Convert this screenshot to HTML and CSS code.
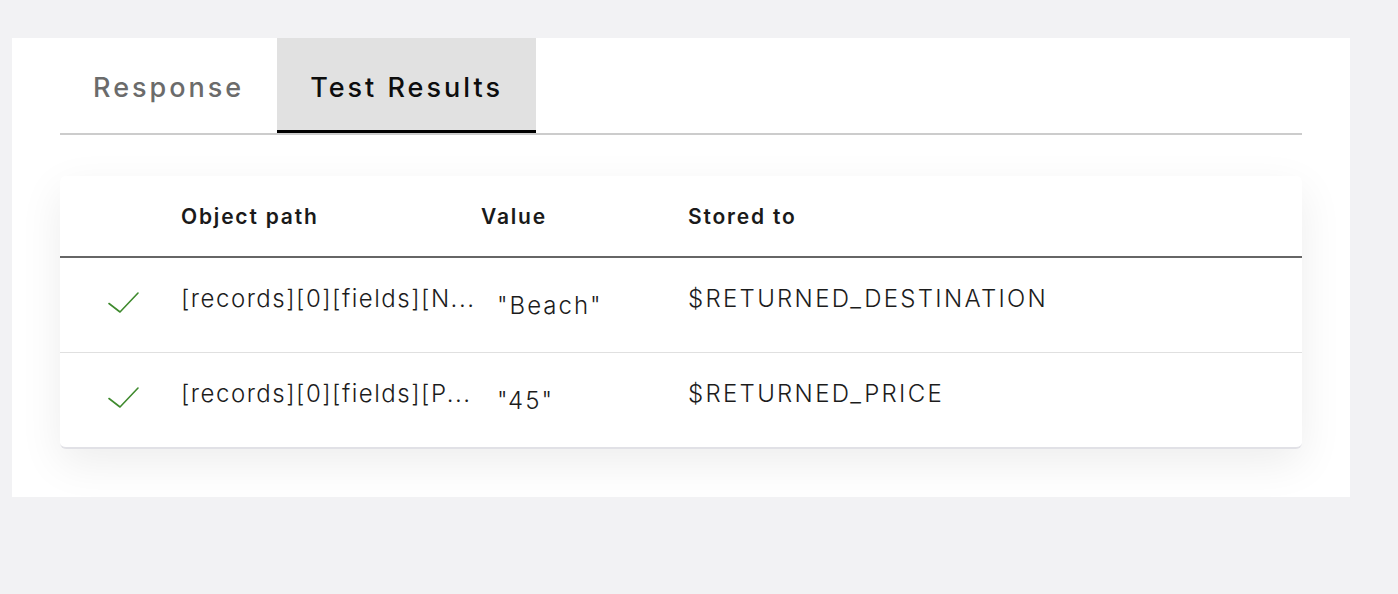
FILE: index.html
```html
<!DOCTYPE html>
<html lang="en">
<head>
<meta charset="utf-8">
<title>Test Results</title>
<link rel="stylesheet" href="styles.css">
</head>
<body>
<div class="panel">
  <div class="tabs">
    <div class="tab">Response</div>
    <div class="tab tab-active">Test Results</div>
  </div>
  <div class="card">
    <div class="row row-head">
      <div class="cell cell-icon"></div>
      <div class="cell cell-path">Object path</div>
      <div class="cell cell-value">Value</div>
      <div class="cell cell-store">Stored to</div>
    </div>
    <div class="row row-body">
      <div class="cell cell-icon">
        <svg class="check" width="32" height="22" viewBox="0 0 32 22"><path d="M1 11.5 L12 20 L30 1" fill="none" stroke="#3f8a2e" stroke-width="1.6" stroke-linecap="round" stroke-linejoin="round"/></svg>
      </div>
      <div class="cell cell-path">[records][0][fields][N...</div>
      <div class="cell cell-value">"Beach"</div>
      <div class="cell cell-store">$RETURNED_DESTINATION</div>
    </div>
    <div class="row row-body row-last">
      <div class="cell cell-icon">
        <svg class="check" width="32" height="22" viewBox="0 0 32 22"><path d="M1 11.5 L12 20 L30 1" fill="none" stroke="#3f8a2e" stroke-width="1.6" stroke-linecap="round" stroke-linejoin="round"/></svg>
      </div>
      <div class="cell cell-path">[records][0][fields][P...</div>
      <div class="cell cell-value">"45"</div>
      <div class="cell cell-store">$RETURNED_PRICE</div>
    </div>
  </div>
</div>
</body>
</html>
```
FILE: styles.css
```css
html, body {
  margin: 0;
  padding: 0;
  background: #f2f2f4;
}
body {
  padding: 38px 48px 0 12px;
  font-family: "Inter", "Noto Sans", sans-serif;
  color: #1f1f1f;
}
.panel {
  background: #ffffff;
  padding: 0 48px 48px 48px;
  height: 459px;
  box-sizing: border-box;
}
.tabs {
  display: flex;
  border-bottom: 2px solid #cccccc;
}
.tab {
  height: 95px;
  padding: 6px 33px 0 33px;
  box-sizing: border-box;
  display: flex;
  align-items: center;
  font-size: 27px;
  font-weight: 500;
  letter-spacing: 3px;
  color: #6b6b6b;
  border-bottom: 3px solid transparent;
}
.tab-active {
  background: #e1e1e1;
  color: #0d0d0d;
  border-bottom-color: #000000;
}
.card {
  margin-top: 41px;
  background: #ffffff;
  border-radius: 6px;
  border-bottom: 2px solid #e1e1e6;
  box-shadow: 0 14px 44px rgba(0, 0, 0, 0.075);
}
.row {
  display: flex;
  align-items: center;
}
.row-head {
  height: 80px;
  border-bottom: 2px solid #666666;
  font-size: 21px;
  font-weight: 600;
  letter-spacing: 1.8px;
  color: #1a1a1a;
}
.row-body {
  height: 94px;
  border-bottom: 1px solid #e0e0e0;
  font-size: 24px;
  font-weight: 300;
  color: #1c1c1c;
}
.row-last {
  border-bottom: none;
}
.cell-icon {
  width: 121px;
  display: flex;
  justify-content: center;
  padding-left: 6px;
  box-sizing: border-box;
}
.cell-path {
  width: 300px;
}
.cell-value {
  width: 207px;
}
.cell-store {
  flex: 1;
}
.row-body .cell-path {
  letter-spacing: 1.5px;
  margin-bottom: 14px;
}
.row-body .cell-store {
  letter-spacing: 2.3px;
  margin-bottom: 14px;
}
.row-body .cell-value {
  padding-left: 16px;
  box-sizing: border-box;
  letter-spacing: 2px;
}
.row-body .cell-icon {
  margin-bottom: 4px;
}
.check {
  display: block;
}
```
